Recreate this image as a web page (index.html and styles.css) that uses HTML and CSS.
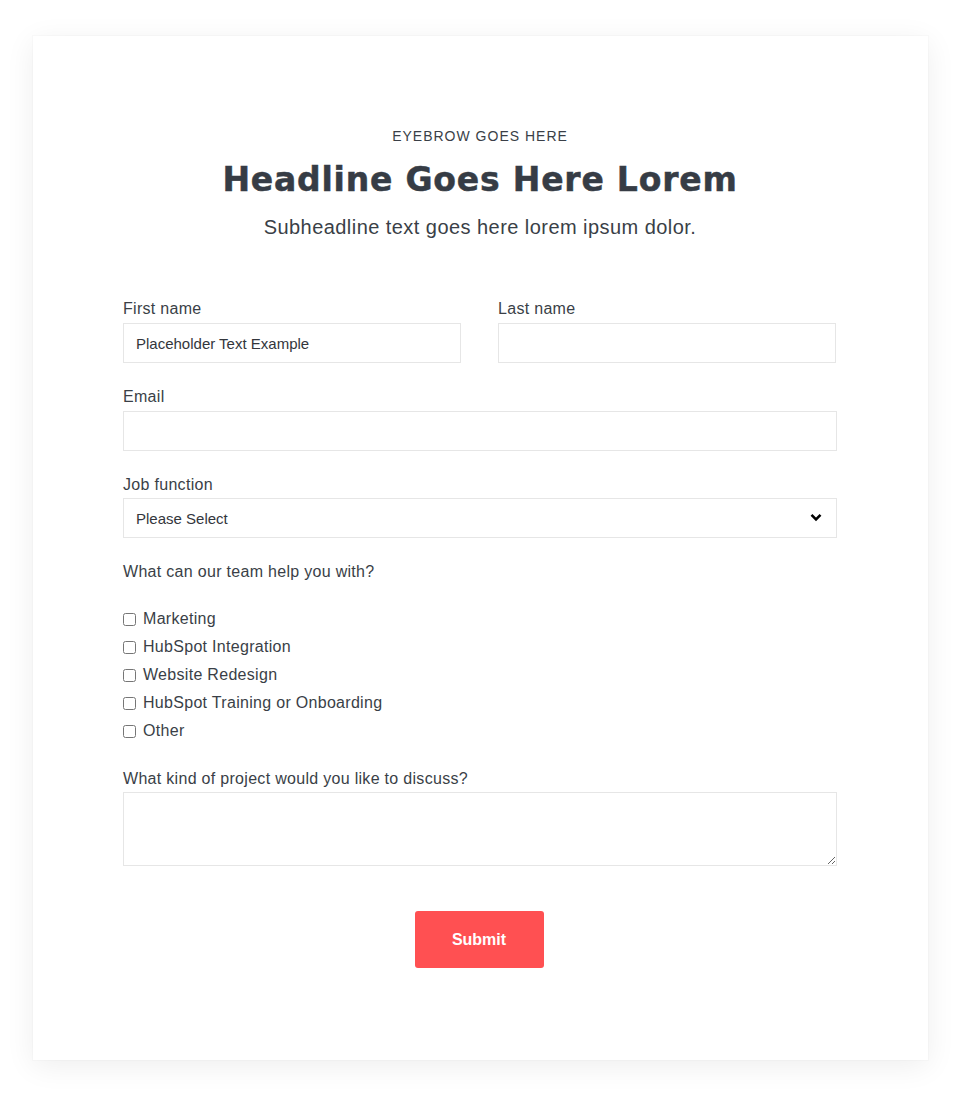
FILE: index.html
```html
<!DOCTYPE html>
<html lang="en">
<head>
<meta charset="utf-8">
<title>Contact form</title>
<link rel="stylesheet" href="styles.css">
</head>
<body>
<div class="page">
  <section class="card">
    <header class="intro">
      <p class="eyebrow">EYEBROW GOES HERE</p>
      <h1 class="headline">Headline Goes Here Lorem</h1>
      <p class="subheadline">Subheadline text goes here lorem ipsum dolor.</p>
    </header>

    <form class="form">
      <div class="row">
        <div class="field">
          <label class="label" for="first">First name</label>
          <input class="input" id="first" type="text" placeholder="Placeholder Text Example">
        </div>
        <div class="field">
          <label class="label" for="last">Last name</label>
          <input class="input" id="last" type="text">
        </div>
      </div>

      <div class="field">
        <label class="label" for="email">Email</label>
        <input class="input" id="email" type="email">
      </div>

      <div class="field">
        <label class="label label-tight" for="job">Job function</label>
        <div class="select-wrap">
          <select class="input select" id="job">
            <option>Please Select</option>
          </select>
          <svg class="chevron" width="12" height="9" viewBox="0 0 12 9" aria-hidden="true">
            <polyline points="1.5,1.8 6,6.3 10.5,1.8" fill="none" stroke="#000" stroke-width="2.6"/>
          </svg>
        </div>
      </div>

      <fieldset class="group">
        <legend class="label legend">What can our team help you with?</legend>
        <ul class="checks">
          <li><label class="check"><input type="checkbox"> Marketing</label></li>
          <li><label class="check"><input type="checkbox"> HubSpot Integration</label></li>
          <li><label class="check"><input type="checkbox"> Website Redesign</label></li>
          <li><label class="check"><input type="checkbox"> HubSpot Training or Onboarding</label></li>
          <li><label class="check"><input type="checkbox"> Other</label></li>
        </ul>
      </fieldset>

      <div class="field">
        <label class="label label-tight" for="project">What kind of project would you like to discuss?</label>
        <textarea class="input textarea" id="project"></textarea>
      </div>

      <div class="actions">
        <button class="submit" type="button">Submit</button>
      </div>
    </form>
  </section>
</div>
</body>
</html>
```

FILE: styles.css
```css
* {
  box-sizing: border-box;
}

html, body {
  margin: 0;
  background: #fff;
}

body {
  font-family: "Liberation Sans", Arial, sans-serif;
  color: #3a3f47;
}

.page {
  padding: 36px 30px 54px 33px;
}

.card {
  width: 895px;
  height: 1024px;
  background: #fff;
  padding: 92px 91px 0 90px;
  box-shadow: 0 0 0 1px rgba(0, 0, 0, 0.015), 0 6px 28px rgba(0, 0, 0, 0.07);
}

/* Heading block */
.intro {
  text-align: center;
}

.eyebrow {
  margin: 0;
  font-size: 14px;
  line-height: 16px;
  letter-spacing: 1px;
  color: #3a3f47;
}

.headline {
  margin: 13px 0 0;
  font-family: "DejaVu Sans", "Liberation Sans", sans-serif;
  font-size: 33px;
  line-height: 46px;
  font-weight: 700;
  letter-spacing: 0.8px;
  -webkit-text-stroke: 0.5px #363c45;
  color: #363c45;
}

.subheadline {
  margin: 12px 0 0;
  font-size: 20px;
  line-height: 24px;
  letter-spacing: 0.45px;
  color: #3a3f47;
}

/* Form */
.form {
  margin-top: 60px;
}

.row {
  display: grid;
  grid-template-columns: 338px 338px;
  column-gap: 37px;
}

.field {
  margin-bottom: 24px;
}

.label {
  display: block;
  font-size: 16px;
  line-height: 20px;
  letter-spacing: 0.3px;
  margin-bottom: 4px;
  color: #3a3f47;
}

.label-tight {
  margin-bottom: 3px;
}

.input {
  display: block;
  width: 100%;
  height: 40px;
  border: 1px solid #e6e6e6;
  border-radius: 0;
  background: #fff;
  padding: 0 12px;
  font-family: "Liberation Sans", Arial, sans-serif;
  font-size: 15px;
  color: #33363c;
  outline: none;
}

.input::placeholder {
  color: #33363c;
  opacity: 1;
}

.select-wrap {
  position: relative;
}

.select {
  appearance: none;
  -webkit-appearance: none;
  padding-right: 40px;
}

.chevron {
  position: absolute;
  right: 15px;
  top: 15px;
  pointer-events: none;
}

.group {
  margin: 0;
  padding: 0;
  border: 0;
  min-width: 0;
}

.legend {
  padding: 0;
  margin-top: 0;
  margin-bottom: 23px;
  float: left;
  width: 100%;
}

.checks {
  clear: both;
  list-style: none;
  margin: 0 0 24px;
  padding: 0;
}

.checks li {
  height: 28px;
  display: flex;
  align-items: center;
}

.check {
  display: flex;
  align-items: center;
  font-size: 16px;
  line-height: 20px;
  letter-spacing: 0.3px;
  color: #3a3f47;
}

.check input {
  width: 13px;
  height: 13px;
  margin: 0 7px 0 0;
}

.textarea {
  height: 74px;
  padding: 10px 12px;
  resize: vertical;
}

.actions {
  display: flex;
  justify-content: center;
  margin-top: 45px;
}

.submit {
  width: 129px;
  height: 57px;
  margin-left: -2px;
  border: 0;
  border-radius: 3px;
  background: #ff5052;
  color: #fff;
  font-family: "Liberation Sans", Arial, sans-serif;
  font-weight: 700;
  font-size: 16px;
  cursor: pointer;
}
```
